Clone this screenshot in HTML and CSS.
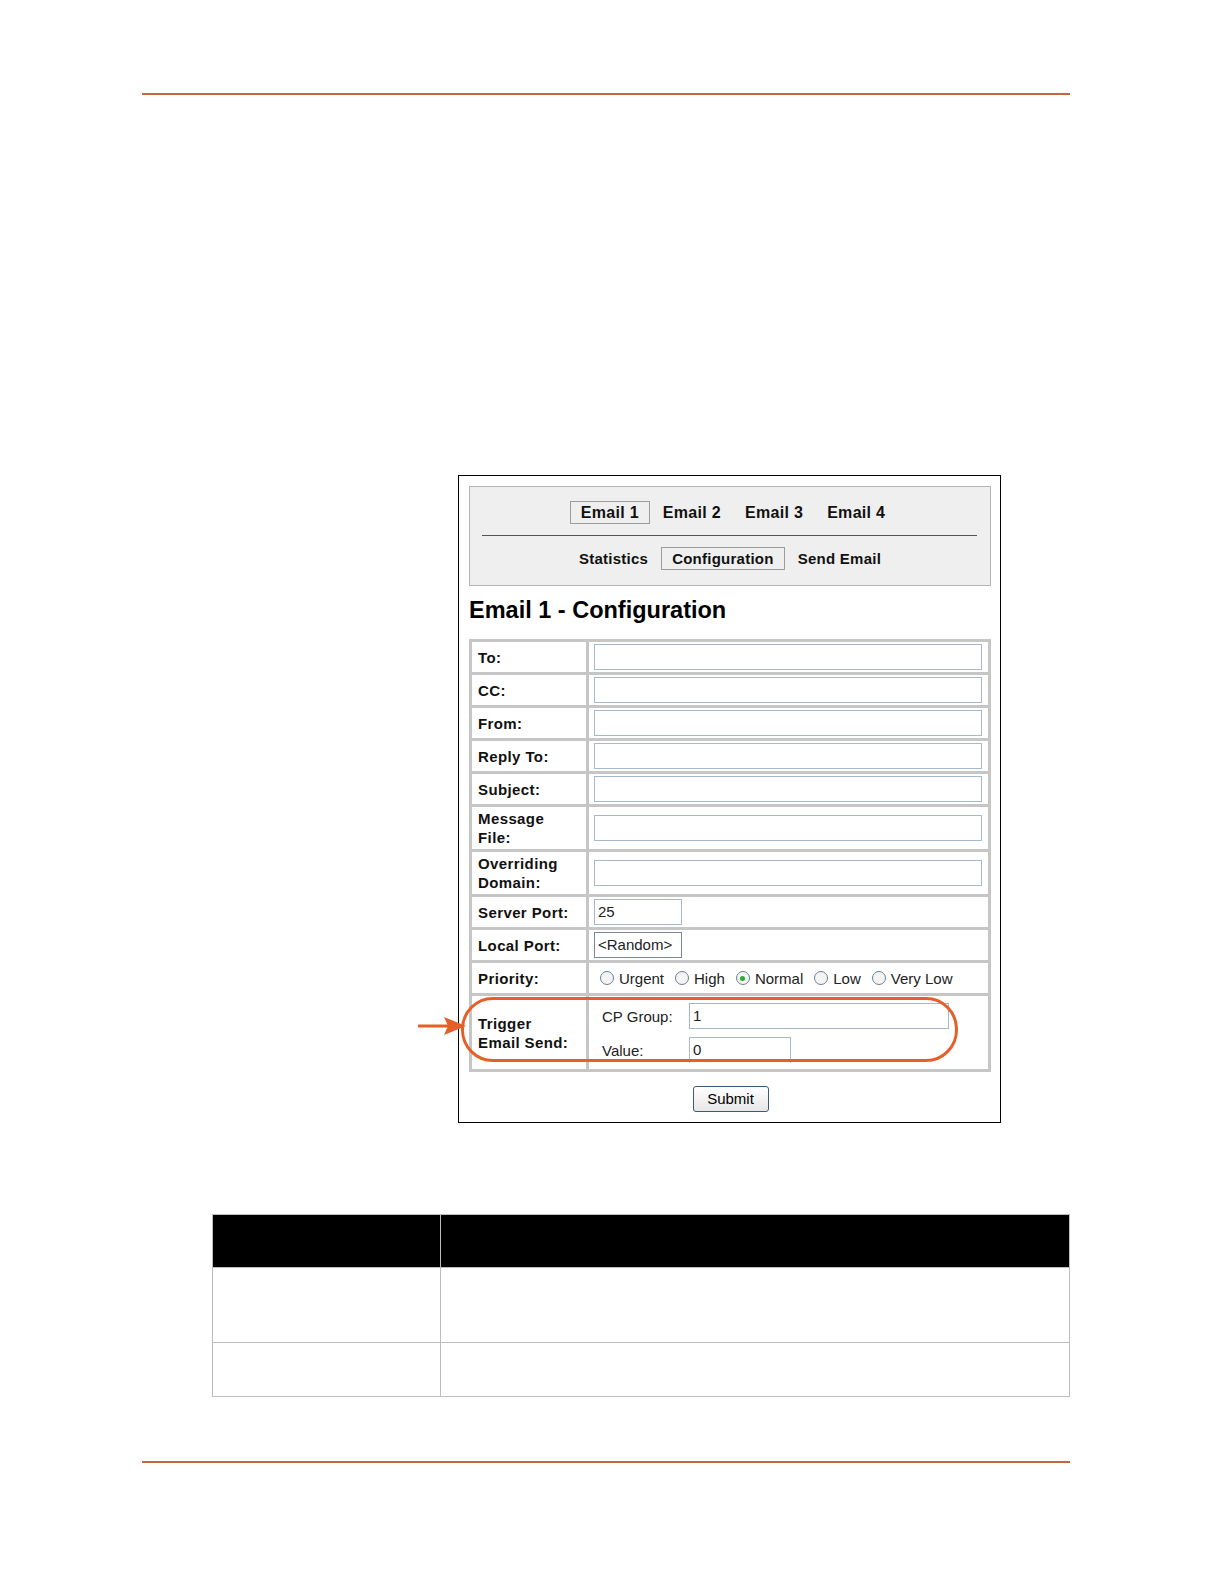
FILE: index.html
```html
<!doctype html>
<html>
<head>
  <link rel="stylesheet" href="styles.css">
</head>
<body>
  <div class="rule top"></div>

  <div class="shot">
    <div class="nav">
      <div class="tabs">
        <span class="tab on">Email 1</span><span class="tab">Email 2</span><span class="tab">Email 3</span><span class="tab">Email 4</span>
      </div>
      <div class="navline"></div>
      <div class="tabs sub">
        <span class="tab">Statistics</span><span class="tab on">Configuration</span><span class="tab">Send Email</span>
      </div>
    </div>

    <h1>Email 1 - Configuration</h1>

    <table class="form">
      <tr class="r1"><td class="lbl">To:</td><td><div class="inp"></div></td></tr>
      <tr class="r1"><td class="lbl">CC:</td><td><div class="inp"></div></td></tr>
      <tr class="r1"><td class="lbl">From:</td><td><div class="inp"></div></td></tr>
      <tr class="r1"><td class="lbl">Reply To:</td><td><div class="inp"></div></td></tr>
      <tr class="r1"><td class="lbl">Subject:</td><td><div class="inp"></div></td></tr>
      <tr class="r2"><td class="lbl">Message<br>File:</td><td><div class="inp"></div></td></tr>
      <tr class="r2"><td class="lbl">Overriding<br>Domain:</td><td><div class="inp"></div></td></tr>
      <tr class="r1"><td class="lbl">Server Port:</td><td><div class="inp short">25</div></td></tr>
      <tr class="r1"><td class="lbl">Local Port:</td><td><div class="inp short dark">&lt;Random&gt;</div></td></tr>
      <tr class="r1"><td class="lbl">Priority:</td><td>
        <div class="radios">
          <span class="opt"><i class="radio"></i>Urgent</span>
          <span class="opt"><i class="radio"></i>High</span>
          <span class="opt"><i class="radio sel"></i>Normal</span>
          <span class="opt"><i class="radio"></i>Low</span>
          <span class="opt"><i class="radio"></i>Very Low</span>
        </div>
      </td></tr>
      <tr class="r3"><td class="lbl">Trigger<br>Email Send:</td><td>
        <div class="trig">
          <div class="trow"><span class="tl">CP Group:</span><div class="inp mid">1</div></div>
          <div class="trow"><span class="tl">Value:</span><div class="inp val">0</div></div>
        </div>
      </td></tr>
    </table>

    <div class="btnrow"><span class="btn">Submit</span></div>

    <div class="oval"></div>
    <svg class="arrow" width="50" height="22" viewBox="0 0 50 22">
      <line x1="0" y1="11" x2="30" y2="11" stroke="#e4602a" stroke-width="3"/>
      <polygon points="26,2 48,11 26,20 30,11" fill="#e4602a"/>
    </svg>
  </div>

  <table class="doc">
    <tr class="head"><td class="c1"></td><td></td></tr>
    <tr class="d1"><td class="c1"></td><td></td></tr>
    <tr class="d2"><td class="c1"></td><td></td></tr>
  </table>

  <div class="rule bottom"></div>
</body>
</html>
```

FILE: styles.css
```css
body{
  margin: 0;
  background: #ffffff;
  font-family: "Liberation Sans", Arial, sans-serif;
  color: #000000;
}
.rule{
  margin-left: 142px;
  width: 928px;
  height: 2px;
  background: #c9643e;
}
.rule.top{
  margin-top: 93px;
}
.rule.bottom{
  margin-top: 64px;
}

/* the screenshot */
.shot{
  position: relative;
  box-sizing: border-box;
  width: 543px;
  height: 648px;
  margin: 380px 0 0 458px;
  padding: 10px 9px 0 10px;
  border: 1px solid #000000;
}
.nav{
  box-sizing: border-box;
  height: 100px;
  padding-top: 14px;
  background: #efefef;
  border: 1px solid #b4b4b4;
}
.tabs{
  display: flex;
  justify-content: center;
  gap: 2px;
  margin-left: 6px;
}
.tab{
  padding: 2px 10px;
  font-size: 16px;
  line-height: 17px;
  font-weight: bold;
  letter-spacing: 0.3px;
  color: #111111;
  border: 1px solid transparent;
}
.tabs.sub{
  margin-left: 0;
}
.tabs.sub .tab{
  font-size: 15px;
  letter-spacing: 0.25px;
}
.tab.on{
  border-color: #9c9c9c;
}
.navline{
  height: 1px;
  margin: 11px 13px 11px 12px;
  background: #555555;
}
h1{
  margin: 10px 0 15px 0;
  font-size: 23.5px;
  line-height: 28px;
  font-weight: bold;
}

.form{
  width: 522px;
  border-collapse: collapse;
  border: 3px solid #c6c6c6;
}
.form td{
  border: 3px solid #c6c6c6;
  padding: 0 0 0 5px;
  font-size: 15px;
}
.form td.lbl{
  width: 108px;
  padding-left: 6px;
  font-weight: bold;
  letter-spacing: 0.4px;
  line-height: 19px;
  color: #111111;
}
.r1 td{ height: 30px; }
.r2 td{ height: 42px; }
.r3 td{ height: 73px; }

.inp{
  box-sizing: border-box;
  width: 388px;
  height: 26px;
  padding: 3px 3px;
  border: 1px solid #a6b8cc;
  background: #ffffff;
  font-size: 15px;
  line-height: 18px;
  color: #222222;
}
.inp.short{
  width: 88px;
}
.inp.dark{
  border-color: #7a8898;
}
.inp.mid{
  width: 260px;
}
.inp.val{
  width: 102px;
  border-bottom: none;
}

.radios{
  display: flex;
  gap: 11px;
  padding-left: 6px;
  color: #222222;
}
.opt{
  display: flex;
  align-items: center;
  gap: 5px;
}
.radio{
  box-sizing: border-box;
  width: 14px;
  height: 14px;
  border-radius: 50%;
  border: 1px solid #6e7f93;
  background: #f4f4f4;
  display: flex;
  align-items: center;
  justify-content: center;
}
.radio.sel::after{
  content: "";
  width: 5px;
  height: 5px;
  border-radius: 50%;
  background: #2bb02b;
}

.trig{
  padding: 1px 0 0 8px;
}
.trow{
  display: flex;
  align-items: center;
  height: 34px;
}
.tl{
  width: 87px;
  color: #222222;
}

.btnrow{
  display: flex;
  justify-content: center;
  margin-top: 14px;
}
.btn{
  box-sizing: border-box;
  width: 76px;
  height: 26px;
  border: 1px solid #3c5a7c;
  border-radius: 3px;
  background: linear-gradient(#ffffff, #e6e6e6);
  font-size: 15px;
  line-height: 24px;
  text-align: center;
  margin-left: 1px;
}

.oval{
  position: absolute;
  left: 2px;
  top: 521px;
  width: 491px;
  height: 59px;
  border: 3px solid #e4602a;
  border-radius: 32px;
}
.arrow{
  position: absolute;
  left: -41px;
  top: 539px;
}

/* table in the document */
.doc{
  width: 858px;
  margin: 91px 0 0 212px;
  border-collapse: collapse;
}
.doc td{
  border: 1px solid #bdbdbd;
  padding: 0;
}
.doc td.c1{
  width: 227px;
}
.doc .head td{
  height: 52px;
  background: #000000;
}
.doc .d1 td{
  height: 74px;
}
.doc .d2 td{
  height: 53px;
}
```
